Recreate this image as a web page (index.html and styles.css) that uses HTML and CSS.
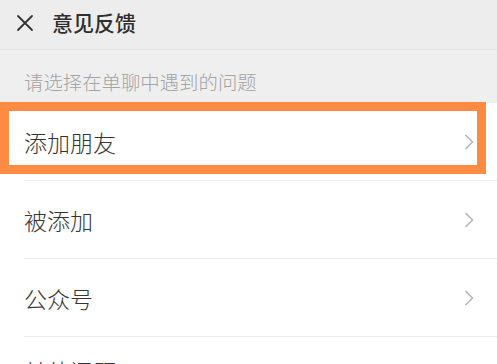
FILE: index.html
```html
<!DOCTYPE html>
<html lang="zh-CN">
<head>
<meta charset="utf-8">
<link rel="stylesheet" href="styles.css">
</head>
<body>
<div class="page">
  <header class="topbar">
    <svg class="close" width="18" height="18" viewBox="0 0 18 18"><path d="M2 2L16 16M16 2L2 16" stroke="#333" stroke-width="1.8" stroke-linecap="round" fill="none"/></svg>
    <span class="title">意见反馈</span>
  </header>
  <div class="label">请选择在单聊中遇到的问题</div>
  <div class="list">
    <div class="row"><span class="text">添加朋友</span><svg class="chev" width="10" height="16" viewBox="0 0 10 16"><path d="M1.5 1L8.5 8L1.5 15" stroke="#b4b4b4" stroke-width="1.5" fill="none"/></svg></div>
    <div class="row"><span class="text">被添加</span><svg class="chev" width="10" height="16" viewBox="0 0 10 16"><path d="M1.5 1L8.5 8L1.5 15" stroke="#b4b4b4" stroke-width="1.5" fill="none"/></svg></div>
    <div class="row"><span class="text">公众号</span><svg class="chev" width="10" height="16" viewBox="0 0 10 16"><path d="M1.5 1L8.5 8L1.5 15" stroke="#b4b4b4" stroke-width="1.5" fill="none"/></svg></div>
    <div class="row row-last"><span class="text">其他问题</span><svg class="chev chev-last" width="10" height="16" viewBox="0 0 10 16"><path d="M1.5 1L8.5 8L1.5 15" stroke="#b4b4b4" stroke-width="1.5" fill="none"/></svg></div>
  </div>
  <div class="highlight"></div>
</div>
</body>
</html>
```
FILE: styles.css
```css
html, body {
  margin: 0;
  padding: 0;
  background: #ffffff;
}
body {
  font-family: "Noto Sans CJK SC", "Noto Sans", sans-serif;
  overflow: hidden;
}
.page {
  position: relative;
  width: 497px;
  height: 364px;
  overflow: hidden;
}
.topbar {
  height: 49px;
  background: #ededed;
  border-bottom: 1px solid #e2e2e2;
  display: flex;
  align-items: center;
  padding-left: 16px;
}
.close {
  display: block;
  margin-right: 18px;
  margin-top: -4px;
}
.title {
  font-size: 21px;
  color: #2e2e2e;
  font-weight: 500;
  line-height: 24px;
  margin-top: -5px;
}
.label {
  background: #efefef;
  height: 53px;
  box-sizing: border-box;
  padding: 22px 0 0 24px;
  font-size: 19.4px;
  line-height: 20px;
  color: #a3a3a3;
  font-weight: 300;
}
.list {
  background: #ffffff;
}
.row {
  height: 77px;
  margin-left: 24px;
  padding-right: 23px;
  border-bottom: 1px solid #ececec;
  display: flex;
  align-items: center;
  justify-content: space-between;
}
.row-last {
  align-items: flex-start;
  padding-top: 21px;
  box-sizing: border-box;
}
.text {
  font-size: 23px;
  color: #353535;
  line-height: 26px;
  font-weight: 300;
}
.chev {
  display: block;
}
.chev-last {
  margin-top: 20px;
}
.highlight {
  position: absolute;
  left: 0;
  top: 102px;
  width: 486px;
  height: 72px;
  box-sizing: border-box;
  border: 9px solid #fe8b44;
}
```
